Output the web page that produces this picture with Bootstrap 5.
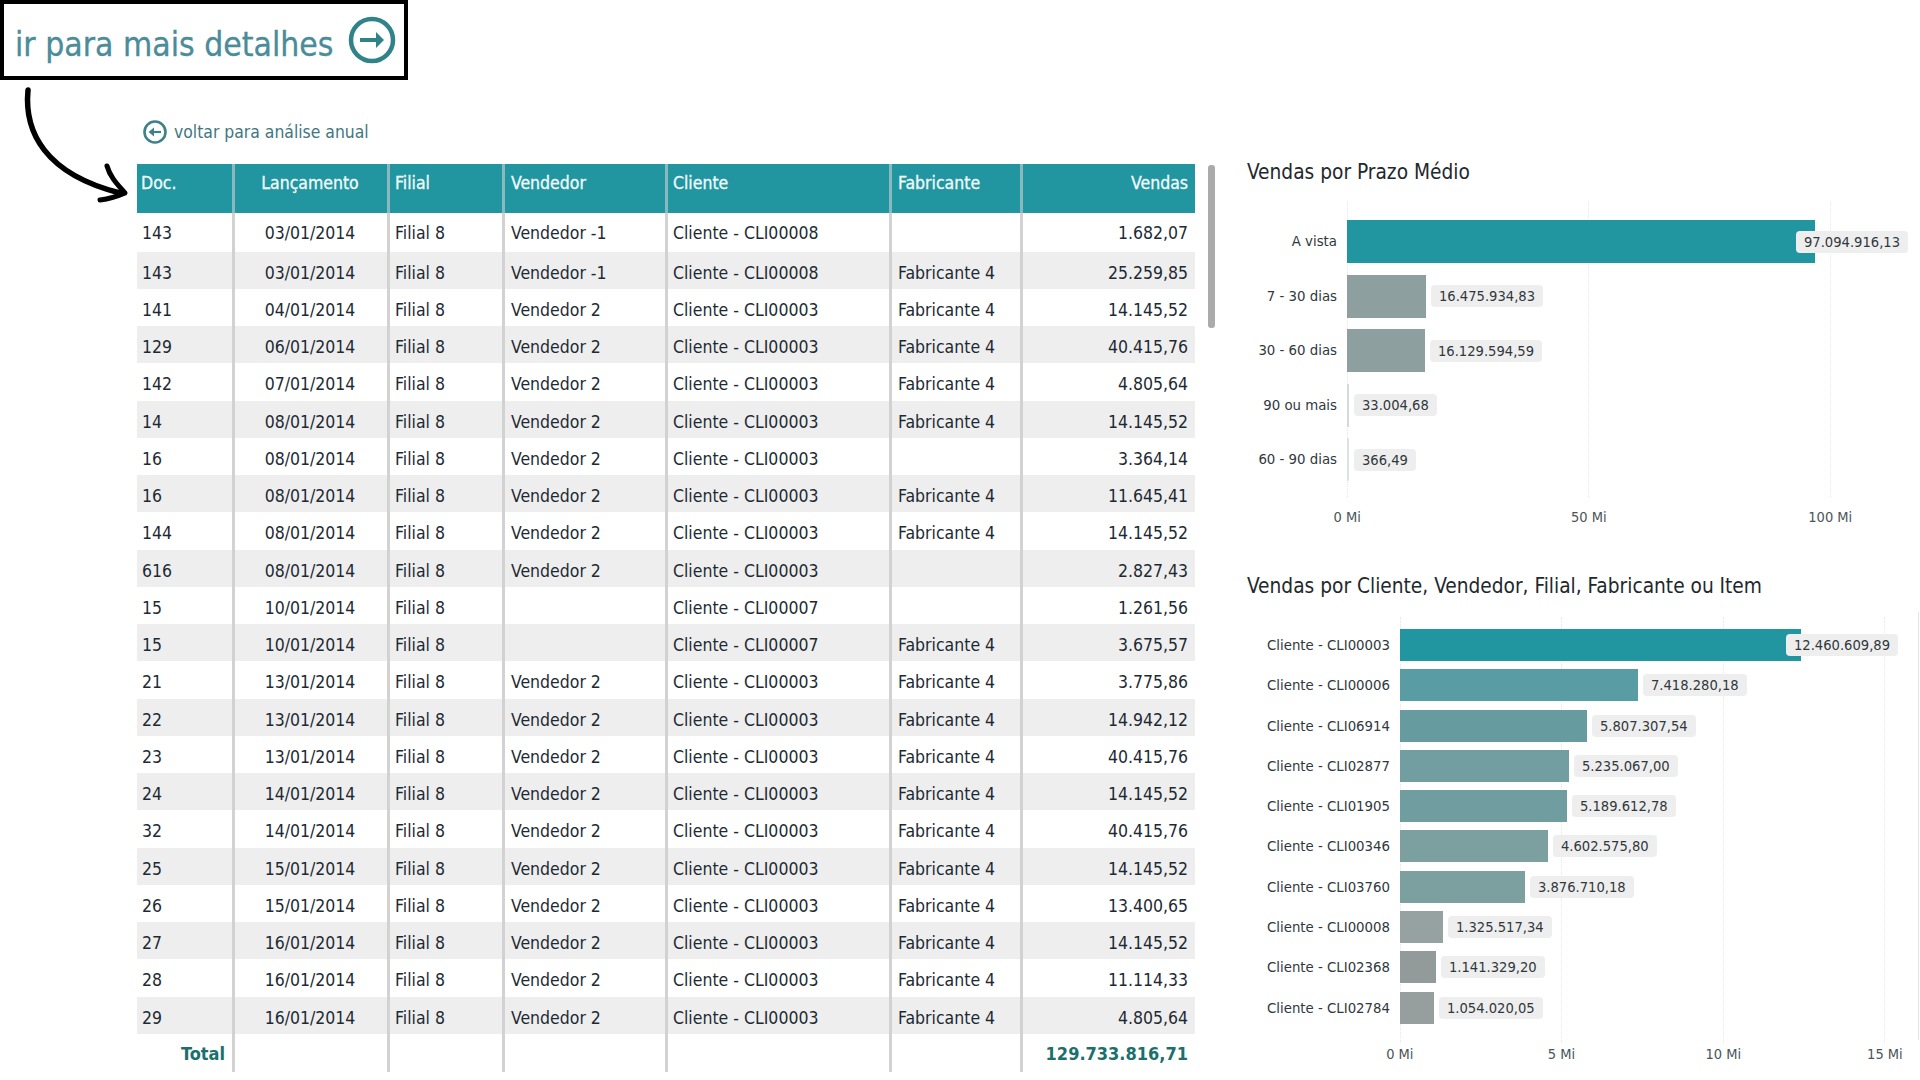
<!DOCTYPE html>
<html lang="pt-BR">
<head>
<meta charset="utf-8">
<title>Vendas</title>
<link href="https://cdn.jsdelivr.net/npm/bootstrap@5.3.0/dist/css/bootstrap.min.css" rel="stylesheet">
<style>
html,body{height:1080px;overflow:hidden;background:#fff}
body{font-family:"DejaVu Sans",sans-serif;font-stretch:condensed;color:#1d2a33;position:relative}
.callout{width:408px;height:80px;border:4px solid #000;color:#4a8c9a;font-size:33.4px;padding:0 0 0 11px;gap:15px}
.callout span{position:relative;top:5px;-webkit-text-stroke:.3px #4a8c9a}
.page-arrow{position:absolute;left:0;top:80px;width:140px;height:130px}
.left-pane{margin-left:137px;width:1058px}
.back-row{height:28px;margin-top:38px;margin-bottom:18px;padding-left:5px;gap:6px;color:#3f7780;font-size:17.4px}
.sheet{table-layout:fixed;width:1058px;border-collapse:separate;border-spacing:0;margin:0;font-size:17.5px;color:#1d2a33}
.sheet th,.sheet td{padding:0 7px 0 5px;border:0;border-right:3px solid #d2d2d2;white-space:nowrap;box-shadow:none;background:transparent;vertical-align:middle;overflow:visible}
.sheet tbody td{padding-top:5px}
.sheet tbody tr:first-child td{padding-top:2px}
.sheet th:nth-child(4),.sheet td:nth-child(4),.sheet th:nth-child(6),.sheet td:nth-child(6){padding-left:6px}
.sheet th:last-child,.sheet td:last-child{border-right:0}
.sheet thead tr{height:49px}
.sheet th{background:#2196a0;color:#f2fbfb;font-weight:400;vertical-align:top;padding-top:6px;border-right-color:#8ab9bd;-webkit-text-stroke:.3px #f2fbfb}
.sheet th:first-child{padding-left:4px}
.sheet tbody tr{height:37px}
.sheet tbody tr:nth-child(4n+1){height:38px}
.sheet tbody tr:first-child{height:39px}
.sheet tbody tr:nth-child(even) td{background:#eeeeee}
.sheet tfoot tr{height:38px}
.sheet tfoot td{font-weight:700;color:#1b6f6c;font-size:18px;padding-top:0}
.scroll-thumb{width:7px;height:163px;margin:85px 0 0 13px;background:#ababab;border-radius:3px;flex:none}
.right-pane{margin-left:32px;width:673px;padding-top:77px}
.chart-head{font-size:20.7px;height:30px;line-height:30px;color:#22282c;white-space:nowrap}
.plot{position:relative}
.plot-a{padding-top:33px;height:319px;--cat:90px}
.plot-b{padding-top:28px;height:441.5px;--cat:143px}
.grid-line{position:absolute;width:0;border-left:1px dotted #e6e6e6}
.plot-a .grid-line{top:15px;bottom:9px}
.plot-b .grid-line{top:16px;bottom:0}
.bar-row{display:flex;align-items:center}
.plot-a .bar-row{height:43px;margin-bottom:11.5px}
.plot-b .bar-row{height:32px;margin-bottom:8.3px}
.cat-name{width:var(--cat);margin-right:10px;text-align:right;font-size:14.8px;color:#30383c;white-space:nowrap;flex:none}
.bar-fill{height:100%;flex:none;position:relative}
.val-tag{position:relative;z-index:1;height:22px;line-height:22px;padding:0 8px;margin-left:5px;background:#eeeeee;border-radius:4px;font-size:14.6px;color:#30383c;white-space:nowrap;flex:none}
.tick-row{display:flex;font-size:14.5px;color:#4c5559;height:22px;line-height:22px}
.tick-row div{flex:none;text-align:center}
.ticks-a{margin-left:-20.5px}
.ticks-a div{width:241.5px}
.ticks-b{margin-left:72px}
.ticks-b div{width:161.7px}
.chart-gap{height:43px}
.edge-line{position:absolute;right:1px;top:612px;height:428px;width:1px;background:#e4e4e4}
</style>
</head>
<body>
<div class="callout d-flex align-items-center">
  <span>ir para mais detalhes</span>
  <svg width="48" height="48" viewBox="0 0 48 48" fill="none" stroke="#2f8389" stroke-width="4.5"><circle cx="24" cy="24" r="21"/><path d="M12 24H33" stroke-width="4"/><path d="M28 16l8 8-8 8z" fill="#2f8389" stroke="none"/></svg>
</div>

<svg class="page-arrow" viewBox="0 0 140 130" fill="none" stroke="#000" stroke-linecap="round" stroke-linejoin="round">
  <path d="M28 10C24 52 45 94 120 113" stroke-width="5.5"/>
  <path d="M107 86C110 97 118 105 125 113C116 117 108 119 100 120" stroke-width="5"/>
</svg>

<div class="d-flex">
  <div class="left-pane">
    <div class="back-row d-flex align-items-center">
      <svg width="26" height="26" viewBox="0 0 26 26" fill="none" stroke="#3d8288" stroke-width="2.6"><circle cx="13" cy="13" r="10.5"/><path d="M9 13H19" stroke-width="2.2"/><path d="M12 8.5l-5.500 4.500 5.500 4.500z" fill="#3d8288" stroke="none"/></svg>
      <span>voltar para análise anual</span>
    </div>
    <table class="table sheet">
      <colgroup><col style="width:98px"><col style="width:155px"><col style="width:115px"><col style="width:163px"><col style="width:224px"><col style="width:131px"><col style="width:172px"></colgroup>
      <thead><tr><th>Doc.</th><th class="text-center">Lançamento</th><th>Filial</th><th>Vendedor</th><th>Cliente</th><th>Fabricante</th><th class="text-end">Vendas</th></tr></thead>
      <tbody>
        <tr><td>143</td><td class="text-center">03/01/2014</td><td>Filial 8</td><td>Vendedor -1</td><td>Cliente - CLI00008</td><td></td><td class="text-end">1.682,07</td></tr>
        <tr><td>143</td><td class="text-center">03/01/2014</td><td>Filial 8</td><td>Vendedor -1</td><td>Cliente - CLI00008</td><td>Fabricante 4</td><td class="text-end">25.259,85</td></tr>
        <tr><td>141</td><td class="text-center">04/01/2014</td><td>Filial 8</td><td>Vendedor 2</td><td>Cliente - CLI00003</td><td>Fabricante 4</td><td class="text-end">14.145,52</td></tr>
        <tr><td>129</td><td class="text-center">06/01/2014</td><td>Filial 8</td><td>Vendedor 2</td><td>Cliente - CLI00003</td><td>Fabricante 4</td><td class="text-end">40.415,76</td></tr>
        <tr><td>142</td><td class="text-center">07/01/2014</td><td>Filial 8</td><td>Vendedor 2</td><td>Cliente - CLI00003</td><td>Fabricante 4</td><td class="text-end">4.805,64</td></tr>
        <tr><td>14</td><td class="text-center">08/01/2014</td><td>Filial 8</td><td>Vendedor 2</td><td>Cliente - CLI00003</td><td>Fabricante 4</td><td class="text-end">14.145,52</td></tr>
        <tr><td>16</td><td class="text-center">08/01/2014</td><td>Filial 8</td><td>Vendedor 2</td><td>Cliente - CLI00003</td><td></td><td class="text-end">3.364,14</td></tr>
        <tr><td>16</td><td class="text-center">08/01/2014</td><td>Filial 8</td><td>Vendedor 2</td><td>Cliente - CLI00003</td><td>Fabricante 4</td><td class="text-end">11.645,41</td></tr>
        <tr><td>144</td><td class="text-center">08/01/2014</td><td>Filial 8</td><td>Vendedor 2</td><td>Cliente - CLI00003</td><td>Fabricante 4</td><td class="text-end">14.145,52</td></tr>
        <tr><td>616</td><td class="text-center">08/01/2014</td><td>Filial 8</td><td>Vendedor 2</td><td>Cliente - CLI00003</td><td></td><td class="text-end">2.827,43</td></tr>
        <tr><td>15</td><td class="text-center">10/01/2014</td><td>Filial 8</td><td></td><td>Cliente - CLI00007</td><td></td><td class="text-end">1.261,56</td></tr>
        <tr><td>15</td><td class="text-center">10/01/2014</td><td>Filial 8</td><td></td><td>Cliente - CLI00007</td><td>Fabricante 4</td><td class="text-end">3.675,57</td></tr>
        <tr><td>21</td><td class="text-center">13/01/2014</td><td>Filial 8</td><td>Vendedor 2</td><td>Cliente - CLI00003</td><td>Fabricante 4</td><td class="text-end">3.775,86</td></tr>
        <tr><td>22</td><td class="text-center">13/01/2014</td><td>Filial 8</td><td>Vendedor 2</td><td>Cliente - CLI00003</td><td>Fabricante 4</td><td class="text-end">14.942,12</td></tr>
        <tr><td>23</td><td class="text-center">13/01/2014</td><td>Filial 8</td><td>Vendedor 2</td><td>Cliente - CLI00003</td><td>Fabricante 4</td><td class="text-end">40.415,76</td></tr>
        <tr><td>24</td><td class="text-center">14/01/2014</td><td>Filial 8</td><td>Vendedor 2</td><td>Cliente - CLI00003</td><td>Fabricante 4</td><td class="text-end">14.145,52</td></tr>
        <tr><td>32</td><td class="text-center">14/01/2014</td><td>Filial 8</td><td>Vendedor 2</td><td>Cliente - CLI00003</td><td>Fabricante 4</td><td class="text-end">40.415,76</td></tr>
        <tr><td>25</td><td class="text-center">15/01/2014</td><td>Filial 8</td><td>Vendedor 2</td><td>Cliente - CLI00003</td><td>Fabricante 4</td><td class="text-end">14.145,52</td></tr>
        <tr><td>26</td><td class="text-center">15/01/2014</td><td>Filial 8</td><td>Vendedor 2</td><td>Cliente - CLI00003</td><td>Fabricante 4</td><td class="text-end">13.400,65</td></tr>
        <tr><td>27</td><td class="text-center">16/01/2014</td><td>Filial 8</td><td>Vendedor 2</td><td>Cliente - CLI00003</td><td>Fabricante 4</td><td class="text-end">14.145,52</td></tr>
        <tr><td>28</td><td class="text-center">16/01/2014</td><td>Filial 8</td><td>Vendedor 2</td><td>Cliente - CLI00003</td><td>Fabricante 4</td><td class="text-end">11.114,33</td></tr>
        <tr><td>29</td><td class="text-center">16/01/2014</td><td>Filial 8</td><td>Vendedor 2</td><td>Cliente - CLI00003</td><td>Fabricante 4</td><td class="text-end">4.805,64</td></tr>
      </tbody>
      <tfoot><tr><td class="text-end">Total</td><td></td><td></td><td></td><td></td><td></td><td class="text-end">129.733.816,71</td></tr></tfoot>
    </table>
  </div>
  <div class="scroll-thumb"></div>
  <div class="right-pane">
    <div class="chart-head">Vendas por Prazo Médio</div>
    <div class="plot plot-a">
      <div class="grid-line" style="left:100px"></div><div class="grid-line" style="left:341px"></div><div class="grid-line" style="left:583px"></div>
      <div class="bar-row"><div class="cat-name">A vista</div><div class="bar-fill" style="width:468px;background:#2196a0"></div><div class="val-tag" style="margin-left:-19px">97.094.916,13</div></div>
      <div class="bar-row"><div class="cat-name">7 - 30 dias</div><div class="bar-fill" style="width:79px;background:#8e9f9f"></div><div class="val-tag">16.475.934,83</div></div>
      <div class="bar-row"><div class="cat-name">30 - 60 dias</div><div class="bar-fill" style="width:78px;background:#8e9f9f"></div><div class="val-tag">16.129.594,59</div></div>
      <div class="bar-row"><div class="cat-name">90 ou mais</div><div class="bar-fill" style="width:2px;background:#d5d9d9"></div><div class="val-tag">33.004,68</div></div>
      <div class="bar-row"><div class="cat-name">60 - 90 dias</div><div class="bar-fill" style="width:2px;background:#dfe2e2"></div><div class="val-tag">366,49</div></div>
    </div>
    <div class="tick-row ticks-a"><div>0 Mi</div><div>50 Mi</div><div>100 Mi</div></div>
    <div class="chart-gap"></div>
    <div class="chart-head">Vendas por Cliente, Vendedor, Filial, Fabricante ou Item</div>
    <div class="plot plot-b">
      <div class="grid-line" style="left:153px"></div><div class="grid-line" style="left:314px"></div><div class="grid-line" style="left:476px"></div><div class="grid-line" style="left:637px"></div>
      <div class="bar-row"><div class="cat-name">Cliente - CLI00003</div><div class="bar-fill" style="width:401px;background:#2196a0"></div><div class="val-tag" style="margin-left:-15px">12.460.609,89</div></div>
      <div class="bar-row"><div class="cat-name">Cliente - CLI00006</div><div class="bar-fill" style="width:238px;background:#599ca4"></div><div class="val-tag">7.418.280,18</div></div>
      <div class="bar-row"><div class="cat-name">Cliente - CLI06914</div><div class="bar-fill" style="width:187px;background:#669ca0"></div><div class="val-tag">5.807.307,54</div></div>
      <div class="bar-row"><div class="cat-name">Cliente - CLI02877</div><div class="bar-fill" style="width:169px;background:#729ea2"></div><div class="val-tag">5.235.067,00</div></div>
      <div class="bar-row"><div class="cat-name">Cliente - CLI01905</div><div class="bar-fill" style="width:167px;background:#6f9da0"></div><div class="val-tag">5.189.612,78</div></div>
      <div class="bar-row"><div class="cat-name">Cliente - CLI00346</div><div class="bar-fill" style="width:148px;background:#7c9fa0"></div><div class="val-tag">4.602.575,80</div></div>
      <div class="bar-row"><div class="cat-name">Cliente - CLI03760</div><div class="bar-fill" style="width:125px;background:#7c9fa0"></div><div class="val-tag">3.876.710,18</div></div>
      <div class="bar-row"><div class="cat-name">Cliente - CLI00008</div><div class="bar-fill" style="width:43px;background:#96a2a2"></div><div class="val-tag">1.325.517,34</div></div>
      <div class="bar-row"><div class="cat-name">Cliente - CLI02368</div><div class="bar-fill" style="width:36px;background:#929a9a"></div><div class="val-tag">1.141.329,20</div></div>
      <div class="bar-row"><div class="cat-name">Cliente - CLI02784</div><div class="bar-fill" style="width:34px;background:#969e9e"></div><div class="val-tag">1.054.020,05</div></div>
    </div>
    <div class="tick-row ticks-b"><div>0 Mi</div><div>5 Mi</div><div>10 Mi</div><div>15 Mi</div></div>
  </div>
</div>
<div class="edge-line"></div>
</body>
</html>
